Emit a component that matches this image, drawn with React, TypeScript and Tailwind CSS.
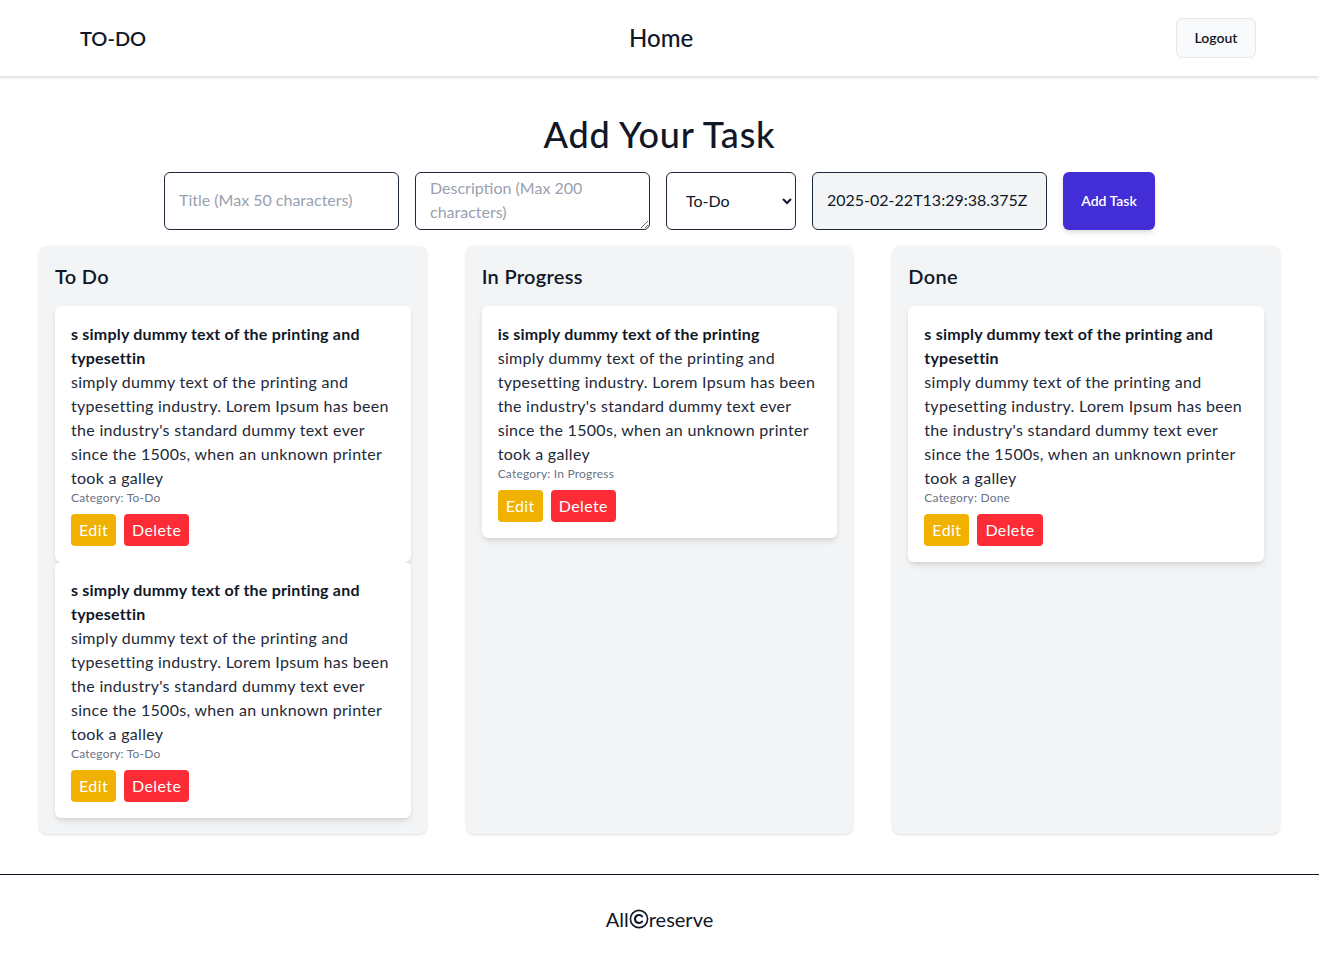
import { useState } from "react";

type Task = {
  id: number;
  title: string;
  description: string;
  category: "To-Do" | "In Progress" | "Done";
};

const desc =
  "simply dummy text of the printing and typesetting industry. Lorem Ipsum has been the industry's standard dummy text ever since the 1500s, when an unknown printer took a galley";

const tasks: Task[] = [
  { id: 1, title: "s simply dummy text of the printing and typesettin", description: desc, category: "To-Do" },
  { id: 2, title: "s simply dummy text of the printing and typesettin", description: desc, category: "To-Do" },
  { id: 3, title: "is simply dummy text of the printing", description: desc, category: "In Progress" },
  { id: 4, title: "s simply dummy text of the printing and typesettin", description: desc, category: "Done" },
];

const columns = [
  { label: "To Do", key: "To-Do" },
  { label: "In Progress", key: "In Progress" },
  { label: "Done", key: "Done" },
] as const;

function CopyrightIcon() {
  return (
    <svg width="20" height="20" viewBox="0 0 20 20" fill="none" className="inline-block">
      <circle cx="10" cy="10" r="8.6" stroke="currentColor" strokeWidth="1.6" />
      <path
        d="M13 7.4A4 4 0 1 0 13 12.6"
        stroke="currentColor"
        strokeWidth="2.2"
        strokeLinecap="round"
      />
    </svg>
  );
}

function TaskCard({ task }: { task: Task }) {
  return (
    <div className="bg-white rounded-md shadow-md p-4">
      <h3 className="text-base leading-6 font-bold tracking-[0.2px] text-gray-900">{task.title}</h3>
      <p className="text-base leading-6 tracking-[0.3px] text-gray-800">{task.description}</p>
      <p className="text-xs leading-4 tracking-[0.2px] text-gray-500">Category: {task.category}</p>
      <div className="flex gap-2 mt-2">
        <button className="bg-yellow-500 text-white px-2 py-1 rounded text-base leading-6 tracking-[0.4px]">
          Edit
        </button>
        <button className="bg-red-500 text-white px-2 py-1 rounded text-base leading-6 tracking-[0.4px]">
          Delete
        </button>
      </div>
    </div>
  );
}

export default function App() {
  const [category, setCategory] = useState("To-Do");

  return (
    <div className="min-h-screen bg-white text-gray-900 font-['Lato','Noto_Sans',sans-serif]">
      <nav className="h-[77px] flex items-center justify-between pl-20 pr-[63px] border-b border-gray-200 shadow-sm">
        <span className="text-xl font-semibold">TO-DO</span>
        <span className="text-2xl font-medium">Home</span>
        <button className="h-10 w-20 bg-gray-50 border border-gray-200 rounded-md text-sm font-semibold">
          Logout
        </button>
      </nav>

      <main>
        <h1 className="text-4xl font-medium tracking-[0.8px] text-center pt-[37px]">Add Your Task</h1>

        <div className="flex justify-center gap-4 mt-[18px]">
          <input
            className="w-[235px] h-[58px] border border-gray-800 rounded-md px-[14px] pb-1 text-base placeholder:text-gray-400"
            placeholder="Title (Max 50 characters)"
          />
          <textarea
            className="w-[235px] h-[58px] border border-gray-800 rounded-md px-[14px] py-[3px] text-base leading-6 placeholder:text-gray-400"
            placeholder="Description (Max 200 characters)"
          />
          <select
            value={category}
            onChange={(e) => setCategory(e.target.value)}
            className="w-[130px] h-[58px] border border-gray-800 rounded-md pl-[15px] pr-2 pb-[2px] text-base bg-white"
          >
            <option>To-Do</option>
            <option>In Progress</option>
            <option>Done</option>
          </select>
          <input
            readOnly
            value="2025-02-22T13:29:38.375Z"
            className="w-[235px] h-[58px] border border-gray-800 rounded-md px-[14px] pb-1 text-base bg-gray-100"
          />
          <button className="w-[92px] h-[58px] bg-indigo-700 text-white text-sm font-semibold rounded-md shadow-md">
            Add Task
          </button>
        </div>

        <div className="grid grid-cols-3 gap-[39px] px-[39px] mt-4">
          {columns.map((col) => (
            <div key={col.key} className="bg-gray-100 rounded-lg shadow-sm p-4">
              <h2 className="text-xl font-semibold tracking-[0.3px] mb-4">{col.label}</h2>
              <div>
                {tasks
                  .filter((t) => t.category === col.key)
                  .map((t) => (
                    <TaskCard key={t.id} task={t} />
                  ))}
              </div>
            </div>
          ))}
        </div>
      </main>

      <footer className="mt-10 border-t border-gray-900 pt-[30px] pb-8 text-center">
        <p className="text-xl inline-flex items-center">
          All
          <CopyrightIcon />
          reserve
        </p>
      </footer>
    </div>
  );
}
